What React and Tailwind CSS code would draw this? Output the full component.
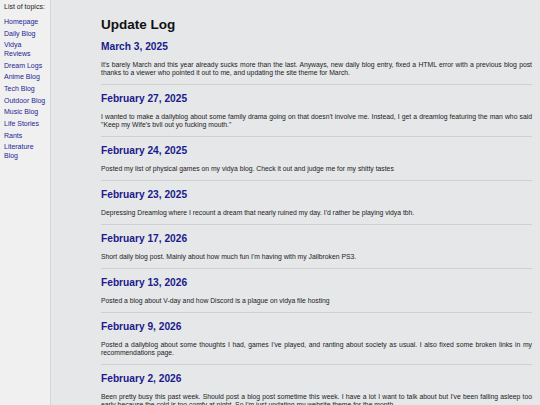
import React from "react";

const links = [
  "Homepage",
  "Daily Blog",
  "Vidya Reviews",
  "Dream Logs",
  "Anime Blog",
  "Tech Blog",
  "Outdoor Blog",
  "Music Blog",
  "Life Stories",
  "Rants",
  "Literature Blog",
];

const entries = [
  {
    date: "March 3, 2025",
    text: "It's barely March and this year already sucks more than the last. Anyways, new daily blog entry, fixed a HTML error with a previous blog post thanks to a viewer who pointed it out to me, and updating the site theme for March.",
  },
  {
    date: "February 27, 2025",
    text: "I wanted to make a dailyblog about some family drama going on that doesn't involve me. Instead, I get a dreamlog featuring the man who said \"Keep my Wife's bvll out yo fucking mouth.\"",
  },
  {
    date: "February 24, 2025",
    text: "Posted my list of physical games on my vidya blog. Check it out and judge me for my shitty tastes",
  },
  {
    date: "February 23, 2025",
    text: "Depressing Dreamlog where I recount a dream that nearly ruined my day. I'd rather be playing vidya tbh.",
  },
  {
    date: "February 17, 2026",
    text: "Short daily blog post. Mainly about how much fun I'm having with my Jailbroken PS3.",
  },
  {
    date: "February 13, 2026",
    text: "Posted a blog about V-day and how Discord is a plague on vidya file hosting",
  },
  {
    date: "February 9, 2026",
    text: "Posted a dailyblog about some thoughts I had, games I've played, and ranting about society as usual. I also fixed some broken links in my recommendations page.",
  },
  {
    date: "February 2, 2026",
    text: "Been pretty busy this past week. Should post a blog post sometime this week. I have a lot I want to talk about but I've been falling asleep too early because the cold is too comfy at night. So I'm just updating my website theme for the month.",
  },
];

export default function App() {
  return (
    <div
      className="flex min-h-screen bg-[#e6e7e9]"
      style={{ fontFamily: '"Liberation Sans", Arial, sans-serif' }}
    >
      <aside className="w-[51px] shrink-0 bg-[#f0f0f0] border-r border-[#d6d6d6] pl-[4px] pr-[3px] pt-[3px]">
        <div className="text-[7px] leading-[8.4px] text-[#222]">List of topics:</div>
        <nav className="mt-[6.6px] flex flex-col gap-[3.3px]">
          {links.map((l) => (
            <a key={l} className="text-[7px] leading-[8.4px] text-[#1e1e96]">
              {l}
            </a>
          ))}
        </nav>
      </aside>
      <main className="flex-1 pl-[50px] pr-[8px] pt-[17px]">
        <h1 className="text-[13.5px] leading-[16px] font-bold text-[#111]">Update Log</h1>
        <div className="mt-[8px]">
          {entries.map((e, i) => (
            <section key={i} className={i === 0 ? "" : "pt-[8px]"}>
              <h2 className="text-[10.2px] leading-[12px] font-bold text-[#1a1a8c]">{e.date}</h2>
              <p className="mt-[8px] text-[6.8px] leading-[8px] text-[#222] text-justify">{e.text}</p>
              <div className="mt-[7px] h-px bg-[#cfd0d2]" />
            </section>
          ))}
        </div>
      </main>
    </div>
  );
}
